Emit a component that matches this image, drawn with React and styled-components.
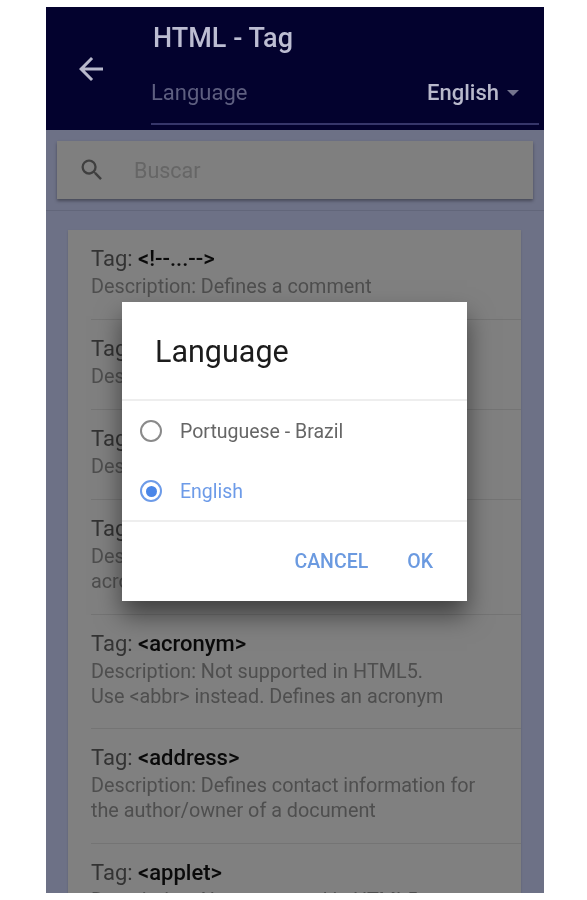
import React from 'react';
import styled, { createGlobalStyle } from 'styled-components';
import { MdArrowBack, MdSearch } from 'react-icons/md';

const GlobalStyle = createGlobalStyle`
  html, body {
    margin: 0;
    background: #fff;
    font-family: Roboto, "Liberation Sans", sans-serif;
  }
`;

const Page = styled.div`
  width: 587px;
  height: 900px;
  padding: 7px 0 0 46px;
  box-sizing: border-box;
  overflow: hidden;
  filter: blur(0.7px);
`;

const Phone = styled.div`
  position: relative;
  width: 498px;
  height: 886px;
  overflow: hidden;
  background: #6d7186;
`;

const Header = styled.header`
  display: flex;
  height: 123px;
  background: #03022e;
`;

const BackButton = styled.div`
  display: flex;
  align-items: center;
  justify-content: center;
  width: 105px;
  height: 124px;
  padding-right: 16px;
  box-sizing: border-box;
  color: #b8b9cc;
`;

const HeaderMain = styled.div`
  flex: 1;
  padding-right: 5px;
`;

const Title = styled.h1`
  margin: 0;
  padding: 15px 0 0 2px;
  height: 32px;
  font-size: 27px;
  line-height: 32px;
  font-weight: 500;
  color: #bcbdd2;
`;

const LanguageRow = styled.div`
  display: flex;
  align-items: flex-start;
  justify-content: space-between;
  height: 43px;
  margin-top: 23px;
  padding: 3px 20px 0 0;
  border-bottom: 2px solid #36366a;
`;

const LanguageLabel = styled.span`
  font-size: 22px;
  color: #5e5f80;
`;

const LanguageValue = styled.span`
  display: flex;
  align-items: center;
  gap: 8px;
  font-size: 22px;
  font-weight: 500;
  color: #b8b9cb;
`;

const Caret = styled.span`
  width: 0;
  height: 0;
  border-left: 6px solid transparent;
  border-right: 6px solid transparent;
  border-top: 6px solid #74758e;
`;

const SearchSection = styled.div`
  height: 81px;
  padding: 11px 11px 0;
  box-sizing: border-box;
  border-bottom: 1px solid #62667a;
`;

const SearchBar = styled.div`
  display: flex;
  align-items: center;
  height: 58px;
  padding-left: 21px;
  gap: 28px;
  background: #7f7f7f;
  box-shadow: 0 2px 3px rgba(0, 0, 0, 0.35);
  color: #3f3f3f;
`;

const Placeholder = styled.span`
  font-size: 21.5px;
  color: #666;
`;

const TagList = styled.div`
  margin: 19px 23px 0 22px;
  padding-left: 23px;
  background: #808080;
  box-shadow: 0 1px 2px rgba(0, 0, 0, 0.15);
`;

const TagRow = styled.div`
  height: ${props => props.$height}px;
  padding-top: 16px;
  box-sizing: border-box;
  border-bottom: 1px solid #747474;
`;

const TagName = styled.div`
  font-size: 22px;
  line-height: 25px;
  color: #333;
`;

const TagCode = styled.span`
  font-weight: 500;
  color: #0a0a0a;
`;

const TagDescription = styled.div`
  margin-top: 3px;
  font-size: 19.8px;
  line-height: 25px;
  color: #4e4e4e;
  white-space: pre-line;
`;

const Dialog = styled.div`
  position: absolute;
  left: 76px;
  top: 295px;
  width: 345px;
  height: 299px;
  background: #fff;
  box-shadow: 0 14px 24px rgba(0, 0, 0, 0.5);
`;

const DialogTitle = styled.h2`
  margin: 0;
  height: 99px;
  padding: 31px 0 0 33px;
  box-sizing: border-box;
  font-size: 30.5px;
  line-height: 38px;
  font-weight: 400;
  color: #1c1c1c;
  border-bottom: 2px solid #eeeeee;
`;

const Options = styled.div`
  height: 121px;
  box-sizing: border-box;
  border-bottom: 2px solid #eeeeee;
`;

const Option = styled.div`
  display: flex;
  align-items: center;
  height: 60px;
  padding-left: 18px;
  gap: 18px;
  font-size: 19.5px;
  color: ${props => (props.$selected ? '#6d9be8' : '#666')};
`;

const Radio = styled.span`
  display: flex;
  align-items: center;
  justify-content: center;
  width: 22px;
  height: 22px;
  box-sizing: border-box;
  border-radius: 50%;
  border: 2px solid ${props => (props.$selected ? '#6d9be8' : '#8a8a8a')};

  &::after {
    content: '';
    display: ${props => (props.$selected ? 'block' : 'none')};
    width: 11px;
    height: 11px;
    border-radius: 50%;
    background: #4a86e8;
  }
`;

const Actions = styled.div`
  display: flex;
  justify-content: flex-end;
  align-items: center;
  height: 79px;
  padding-right: 34px;
  gap: 39px;
`;

const ActionButton = styled.button`
  padding: 0;
  border: 0;
  background: none;
  font-family: inherit;
  font-size: 19.5px;
  font-weight: 500;
  color: #6b9ae0;
`;

const TAGS = [
  { code: '<!--...-->', text: 'Description: Defines a comment', height: 90 },
  { code: '<!DOCTYPE>', text: 'Description: Defines the document type', height: 90 },
  { code: '<a>', text: 'Description: Defines a hyperlink', height: 90 },
  { code: '<abbr>', text: 'Description: Defines an abbreviation or\nacronym', height: 115 },
  { code: '<acronym>', text: 'Description: Not supported in HTML5.\nUse <abbr> instead. Defines an acronym', height: 114 },
  { code: '<address>', text: 'Description: Defines contact information for\nthe author/owner of a document', height: 115 },
  { code: '<applet>', text: 'Description: Not supported in HTML5.', height: 100 },
];

export default function App() {
  return (
    <Page>
      <GlobalStyle />
      <Phone>
        <Header>
          <BackButton>
            <MdArrowBack size={36} />
          </BackButton>
          <HeaderMain>
            <Title>HTML - Tag</Title>
            <LanguageRow>
              <LanguageLabel>Language</LanguageLabel>
              <LanguageValue>
                English
                <Caret />
              </LanguageValue>
            </LanguageRow>
          </HeaderMain>
        </Header>
        <SearchSection>
          <SearchBar>
            <MdSearch size={28} />
            <Placeholder>Buscar</Placeholder>
          </SearchBar>
        </SearchSection>
        <TagList>
          {TAGS.map(tag => (
            <TagRow key={tag.code} $height={tag.height}>
              <TagName>
                Tag: <TagCode>{tag.code}</TagCode>
              </TagName>
              <TagDescription>{tag.text}</TagDescription>
            </TagRow>
          ))}
        </TagList>
        <Dialog>
          <DialogTitle>Language</DialogTitle>
          <Options>
            <Option>
              <Radio />
              Portuguese - Brazil
            </Option>
            <Option $selected>
              <Radio $selected />
              English
            </Option>
          </Options>
          <Actions>
            <ActionButton>CANCEL</ActionButton>
            <ActionButton>OK</ActionButton>
          </Actions>
        </Dialog>
      </Phone>
    </Page>
  );
}
